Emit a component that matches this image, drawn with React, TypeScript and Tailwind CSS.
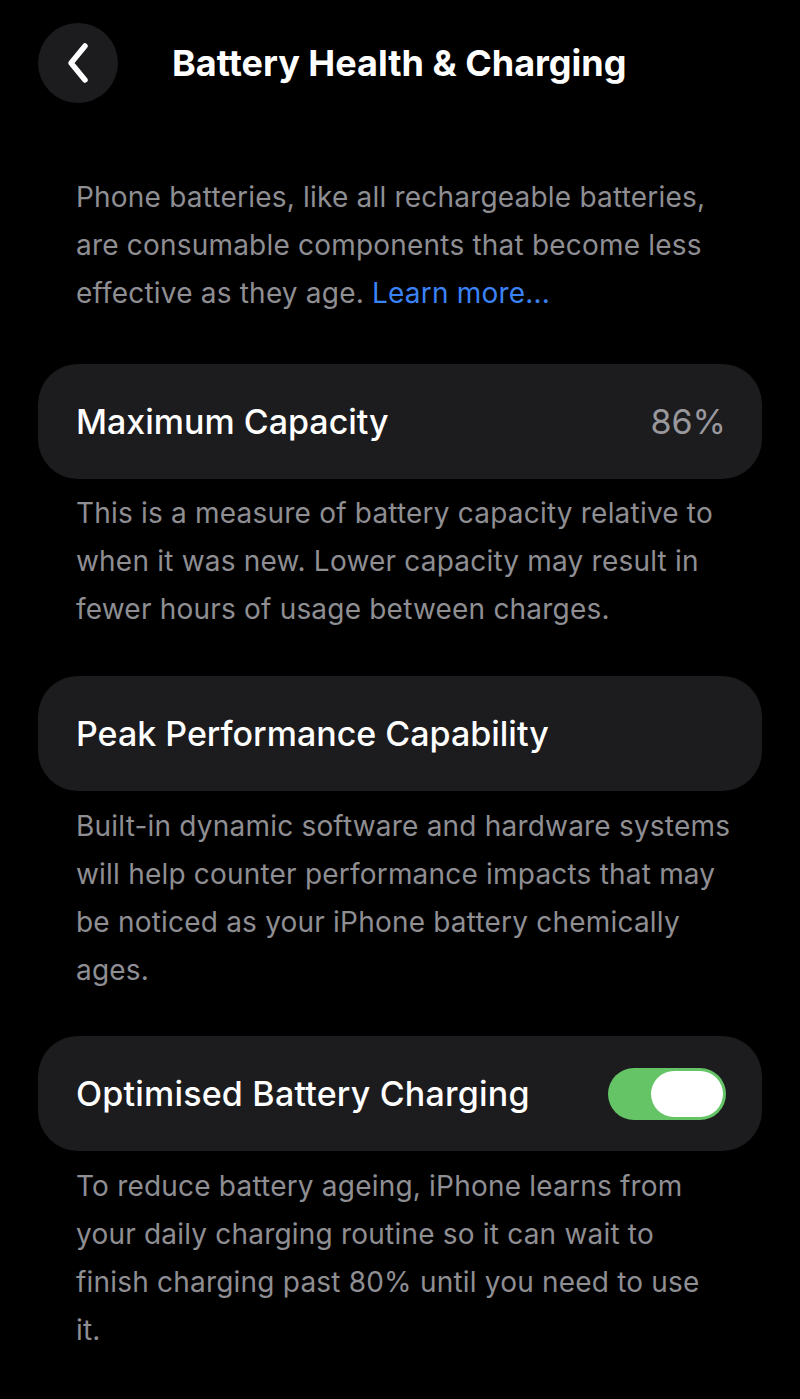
import React from "react";

function BackButton() {
  return (
    <div className="w-[80px] h-[80px] rounded-full bg-[#1c1c1e] flex items-center justify-center shrink-0">
      <svg width="26" height="42" viewBox="0 0 26 42" fill="none">
        <path d="M20 4 L6 21 L20 38" stroke="white" strokeWidth="5.5" strokeLinecap="round" strokeLinejoin="round" />
      </svg>
    </div>
  );
}

function Toggle() {
  return (
    <div className="w-[118px] h-[52px] rounded-full bg-[#65c466] p-[3px] flex justify-end">
      <div className="w-[72px] h-[46px] rounded-full bg-white" />
    </div>
  );
}

function Card({ children }: { children: React.ReactNode }) {
  return (
    <div className="mx-[38px] h-[115px] rounded-[40px] bg-[#1c1c1e] pl-[38px] pr-[36px] flex items-center justify-between">
      {children}
    </div>
  );
}

function Note({ lines, className = "" }: { lines: React.ReactNode[]; className?: string }) {
  return (
    <div className={`px-[76px] text-[28px] leading-[48px] tracking-[0.2px] text-[#8e8e93] ${className}`}>
      {lines.map((l, i) => (
        <div key={i} className="whitespace-nowrap">
          {l}
        </div>
      ))}
    </div>
  );
}

export default function App() {
  return (
    <div
      className="w-[800px] h-[1399px] bg-black text-white overflow-hidden"
      style={{ fontFamily: "Inter, 'Noto Sans', sans-serif" }}
    >
      <header className="pt-[23px] pl-[38px] flex items-center gap-[54px]">
        <BackButton />
        <h1 className="text-[36px] font-bold">Battery Health &amp; Charging</h1>
      </header>

      <Note
        className="mt-[70px]"
        lines={[
          "Phone batteries, like all rechargeable batteries,",
          "are consumable components that become less",
          <>
            effective as they age. <span className="text-[#3b82f6]">Learn more...</span>
          </>,
        ]}
      />

      <div className="mt-[47px]">
        <Card>
          <span className="text-[34px] font-medium">Maximum Capacity</span>
          <span className="text-[34px] text-[#98989d]">86%</span>
        </Card>
        <Note
          className="mt-[10px]"
          lines={[
            "This is a measure of battery capacity relative to",
            "when it was new. Lower capacity may result in",
            "fewer hours of usage between charges.",
          ]}
        />
      </div>

      <div className="mt-[43px]">
        <Card>
          <span className="text-[34px] font-medium">Peak Performance Capability</span>
        </Card>
        <Note
          className="mt-[11px]"
          lines={[
            "Built-in dynamic software and hardware systems",
            "will help counter performance impacts that may",
            "be noticed as your iPhone battery chemically",
            "ages.",
          ]}
        />
      </div>

      <div className="mt-[42px]">
        <Card>
          <span className="text-[34px] font-medium tracking-[0.2px]">Optimised Battery Charging</span>
          <Toggle />
        </Card>
        <Note
          className="mt-[11px]"
          lines={[
            "To reduce battery ageing, iPhone learns from",
            "your daily charging routine so it can wait to",
            "finish charging past 80% until you need to use",
            "it.",
          ]}
        />
      </div>
    </div>
  );
}
